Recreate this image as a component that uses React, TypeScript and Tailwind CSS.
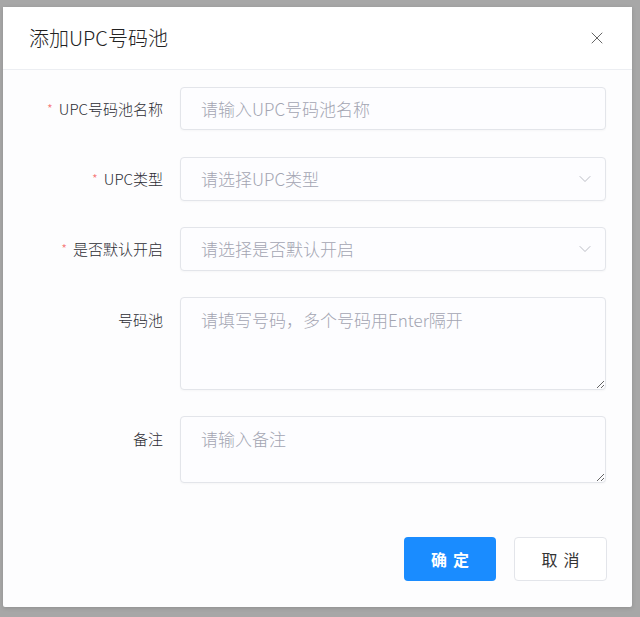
import React from 'react';
import { X, ChevronDown } from 'lucide-react';

const font = { fontFamily: '"Noto Sans CJK SC", "Noto Sans", sans-serif' };

const Label: React.FC<{ text: string; required?: boolean; top?: boolean }> = ({ text, required, top }) => (
  <div className={`w-[177px] shrink-0 pr-[17px] flex justify-end text-[15px] text-[#2c2c33] font-light ${top ? 'pt-[13px] items-start' : 'items-center'}`}>
    {required && <span className="text-[#f56c6c] mr-[6px] text-[13px]">*</span>}
    <span className="leading-5">{text}</span>
  </div>
);

const fieldBox =
  'flex-1 border border-[#e3e5ea] rounded-[4px] bg-[#fdfdff] shadow-[0_1px_2px_rgba(0,0,0,0.03)] text-[17px] font-light text-[#606266] placeholder:text-[#a3a5b2] outline-none';

export default function App() {
  return (
    <div className="h-[617px] w-[640px] bg-[#a7a7a7] overflow-hidden pt-[7px] pl-[3px]" style={font}>
      <div className="w-[629px] h-[600px] bg-[#fdfdfe] rounded-[2px] shadow-[0_1px_4px_rgba(0,0,0,0.15)] flex flex-col">
        <div className="h-[63px] shrink-0 flex items-center justify-between pl-[26px] pr-[25px] border-b border-[#eceef2] bg-white">
          <span className="text-[20px] text-[#222] font-light">添加UPC号码池</span>
          <X className="w-[20px] h-[20px] text-[#666]" strokeWidth={1.2} />
        </div>
        <div className="flex-1 flex flex-col pt-[17px] pr-[26px]">
          <div className="flex h-[43px] mb-[27px]">
            <Label text="UPC号码池名称" required />
            <input className={`${fieldBox} px-[20px]`} placeholder="请输入UPC号码池名称" />
          </div>
          <div className="flex h-[44px] mb-[26px]">
            <Label text="UPC类型" required />
            <div className={`${fieldBox} pl-[20px] pr-[10px] flex items-center justify-between`}>
              <span className="text-[#a3a5b2]">请选择UPC类型</span>
              <ChevronDown className="w-[20px] h-[20px] text-[#b4b6be]" strokeWidth={1.1} />
            </div>
          </div>
          <div className="flex h-[44px] mb-[26px]">
            <Label text="是否默认开启" required />
            <div className={`${fieldBox} pl-[20px] pr-[10px] flex items-center justify-between`}>
              <span className="text-[#a3a5b2]">请选择是否默认开启</span>
              <ChevronDown className="w-[20px] h-[20px] text-[#b4b6be]" strokeWidth={1.1} />
            </div>
          </div>
          <div className="flex h-[93px] mb-[26px]">
            <Label text="号码池" top />
            <textarea className={`${fieldBox} px-[20px] pt-[12px] leading-5 resize-y`} placeholder="请填写号码，多个号码用Enter隔开" />
          </div>
          <div className="flex h-[67px]">
            <Label text="备注" top />
            <textarea className={`${fieldBox} px-[20px] pt-[12px] leading-5 resize-y`} placeholder="请输入备注" />
          </div>
          <div className="flex justify-end gap-[18px] mt-[54px] -mr-[1px]">
            <button className="w-[92px] h-[44px] rounded-[4px] bg-[#1a8cff] text-white text-[16px] font-semibold tracking-[6px] pl-[6px]">确定</button>
            <button className="w-[93px] h-[44px] rounded-[4px] border border-[#e3e5ea] bg-white text-[#333] text-[16px] tracking-[6px] pl-[6px]">取消</button>
          </div>
        </div>
      </div>
    </div>
  );
}
